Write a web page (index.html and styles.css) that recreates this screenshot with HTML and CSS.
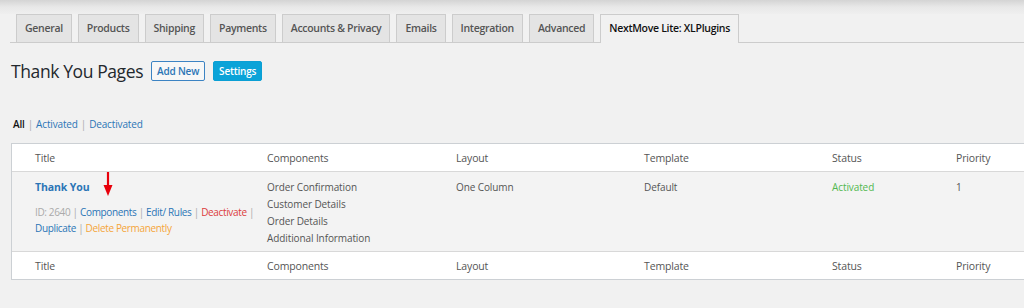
FILE: index.html
```html
<!DOCTYPE html>
<html lang="en">
<head>
  <meta charset="UTF-8" />
  <title>Thank You Pages</title>
  <link rel="stylesheet" href="styles.css">
</head>
<body>
  <div class="sombra"></div>
  <nav class="tabs">
    <a class="tab">General</a>
    <a class="tab">Products</a>
    <a class="tab">Shipping</a>
    <a class="tab">Payments</a>
    <a class="tab">Accounts &amp; Privacy</a>
    <a class="tab">Emails</a>
    <a class="tab">Integration</a>
    <a class="tab">Advanced</a>
    <a class="tab activo">NextMove Lite: XLPlugins</a>
  </nav>

  <div class="cabecera">
    <h1>Thank You Pages</h1>
    <a class="btn btn-borde">Add New</a>
    <a class="btn btn-lleno">Settings</a>
  </div>

  <ul class="filtros">
    <li class="actual">All</li>
    <li class="sep">|</li>
    <li><a>Activated</a></li>
    <li class="sep">|</li>
    <li><a>Deactivated</a></li>
  </ul>

  <div class="tabla">
    <div class="fila fila-cab">
      <div class="col-titulo">Title</div>
      <div>Components</div>
      <div>Layout</div>
      <div>Template</div>
      <div>Status</div>
      <div>Priority</div>
    </div>
    <div class="fila fila-cuerpo">
      <div class="col-titulo">
        <a class="nombre">Thank You</a>
        <div class="acciones">
          <span class="gris">ID: 2640</span> <span class="sep">|</span>
          <span class="flecha-ancla"><a>Components</a>
            <svg class="flecha" width="12" height="25" viewBox="0 0 12 25">
              <line x1="6" y1="0" x2="6" y2="16" stroke="#e8000b" stroke-width="2.2"/>
              <polygon points="1.5,13 10.5,13 6,24" fill="#e8000b"/>
            </svg>
          </span>
          <span class="sep">|</span> <a>Edit/ Rules</a> <span class="sep">|</span>
          <a class="rojo">Deactivate</a> <span class="sep">|</span><br>
          <a>Duplicate</a> <span class="sep">|</span> <a class="naranja">Delete Permanently</a>
        </div>
      </div>
      <div class="lista">
        <span>Order Confirmation</span>
        <span>Customer Details</span>
        <span>Order Details</span>
        <span>Additional Information</span>
      </div>
      <div>One Column</div>
      <div>Default</div>
      <div class="verde">Activated</div>
      <div>1</div>
    </div>
    <div class="fila fila-pie">
      <div class="col-titulo">Title</div>
      <div>Components</div>
      <div>Layout</div>
      <div>Template</div>
      <div>Status</div>
      <div>Priority</div>
    </div>
  </div>
</body>
</html>
```

FILE: styles.css
```css
body {
  font-family: "Open Sans", sans-serif;
  font-size: 10.5px;
  letter-spacing: -0.15px;
  color: #444;
  background: #f1f1f1;
  margin: 0;
  overflow: hidden;
}
a {
  color: #2b75b6;
  text-decoration: none;
}
.sombra {
  height: 14px;
  background: linear-gradient(#d4d4d4, #e8e8e8 50%, #efefef);
}
.tabs {
  display: flex;
  gap: 6px;
  margin-left: 10px;
  padding-left: 6px;
  border-bottom: 1px solid #ccc;
}
.tab {
  display: block;
  height: 27px;
  line-height: 27px;
  padding: 0 8px;
  background: #e4e4e4;
  border: 1px solid #ccc;
  border-bottom: none;
  color: #555;
  font-weight: 600;
  letter-spacing: -0.3px;
}
.tab.activo {
  background: #f1f1f1;
  color: #111;
  margin-bottom: -1px;
  height: 28px;
}
.cabecera {
  display: flex;
  align-items: center;
  gap: 8px;
  margin: 16px 0 0 11px;
}
h1 {
  font-size: 17.5px;
  letter-spacing: -0.4px;
  font-weight: 400;
  color: #23282d;
  margin: 0;
  line-height: 24px;
}
.btn {
  display: block;
  height: 18px;
  line-height: 18px;
  padding: 0 5px;
  font-size: 10px;
  letter-spacing: -0.2px;
  font-weight: 600;
  border-radius: 2px;
}
.btn-borde {
  border: 1px solid #3c83c3;
  color: #2b75b6;
  background: #f7f7f7;
}
.btn-lleno {
  border: 1px solid #0a9fd4;
  background: #0aa3d8;
  color: #fff;
}
.filtros {
  list-style: none;
  display: flex;
  gap: 3px;
  margin: 33px 0 0 13px;
  padding: 0;
  font-size: 10px;
  line-height: 16px;
}
.filtros .actual {
  color: #111;
  font-weight: 600;
}
.sep {
  color: #aaa;
}
.tabla {
  margin: 11px 0 0 11px;
  width: 1040px;
  border: 1px solid #ccd0d4;
  background: #fff;
}
.fila {
  display: grid;
  grid-template-columns: 255px 189px 188px 188px 124px auto;
  color: #555;
}
.fila-cab {
  height: 27px;
  align-items: center;
  border-bottom: 1px solid #d8d8d8;
}
.fila-pie {
  height: 27px;
  align-items: center;
  border-top: 1px solid #d8d8d8;
}
.fila-cuerpo {
  background: #f3f3f3;
  height: 79px;
  padding-top: 7px;
  box-sizing: border-box;
  font-size: 10px;
  letter-spacing: -0.1px;
  line-height: 17px;
}
.col-titulo {
  padding-left: 23px;
}
.nombre {
  font-weight: 700;
  font-size: 10.5px;
}
.acciones {
  margin-top: 8px;
  line-height: 16px;
  letter-spacing: -0.35px;
  white-space: nowrap;
}
.gris {
  color: #aaa;
}
.rojo {
  color: #dc3b3b;
}
.naranja {
  color: #f5a53a;
}
.verde {
  color: #52b84f;
}
.lista {
  display: flex;
  flex-direction: column;
}
.flecha-ancla {
  position: relative;
}
.flecha {
  position: absolute;
  left: 22px;
  top: -33px;
}
```
